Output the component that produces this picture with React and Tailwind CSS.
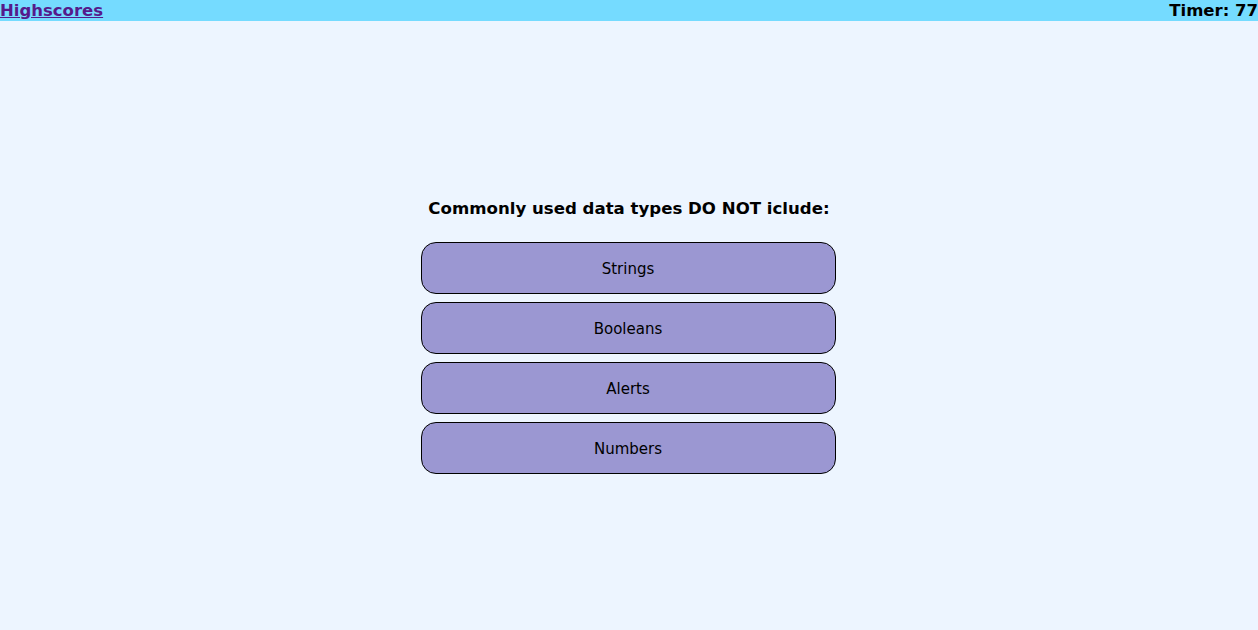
import React from "react";

const answers = ["Strings", "Booleans", "Alerts", "Numbers"];

export default function App() {
  return (
    <div className="min-h-screen bg-[#edf5ff] font-['DejaVu_Sans',sans-serif] text-black">
      <header className="flex h-[21px] items-center justify-between bg-[#75dbff] pt-[2px] text-[16.5px] font-bold leading-none">
        <a href="#" className="text-[#551a8b] underline">
          Highscores
        </a>
        <span>Timer: 77</span>
      </header>

      <main className="flex flex-col items-center pt-[177px]">
        <h2 className="text-[16.6px] font-bold leading-[22px]">
          Commonly used data types DO NOT iclude:
        </h2>
        <div className="mt-[22px] flex w-[415px] -translate-x-[1px] flex-col gap-[8px]">
          {answers.map((a) => (
            <button
              key={a}
              className="h-[52px] rounded-[15px] border border-black bg-[#9b97d2] pt-[2px] text-[15px]"
            >
              {a}
            </button>
          ))}
        </div>
      </main>
    </div>
  );
}
